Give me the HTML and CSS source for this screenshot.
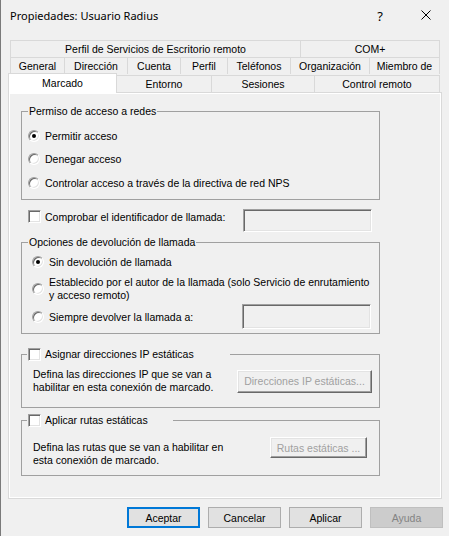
FILE: index.html
```html
<!DOCTYPE html>
<html lang="es">
<head>
<meta charset="utf-8">
<title>Propiedades: Usuario Radius</title>
<link rel="stylesheet" href="styles.css">
</head>
<body>
<div class="window">
  <div class="titlebar">
    <span class="title">Propiedades: Usuario Radius</span>
    <span class="capbtn help">?</span>
    <span class="capbtn close"><svg width="10" height="10" viewBox="0 0 10 10"><path d="M0.5 0.5 L9.5 9.5 M9.5 0.5 L0.5 9.5" stroke="#000" stroke-width="1" fill="none"/></svg></span>
  </div>

  <div class="tabs">
    <div class="tabrow">
      <div class="tab t-perfilts">Perfil de Servicios de Escritorio remoto</div>
      <div class="tab t-com last">COM+</div>
    </div>
    <div class="tabrow">
      <div class="tab t-general">General</div>
      <div class="tab t-direccion">Dirección</div>
      <div class="tab t-cuenta">Cuenta</div>
      <div class="tab t-perfil">Perfil</div>
      <div class="tab t-telefonos">Teléfonos</div>
      <div class="tab t-organizacion">Organización</div>
      <div class="tab t-miembro last">Miembro de</div>
    </div>
    <div class="tabrow front">
      <div class="tab sel t-marcado">Marcado</div>
      <div class="tab t-entorno">Entorno</div>
      <div class="tab t-sesiones">Sesiones</div>
      <div class="tab t-control">Control remoto</div>
    </div>
  </div>

  <div class="panel">
    <div class="page">
      <fieldset class="grp g1">
        <legend class="txtlegend">Permiso de acceso a redes</legend>
        <div class="gb">
          <div class="opt"><span class="radio on"></span><span>Permitir acceso</span></div>
          <div class="opt"><span class="radio"></span><span>Denegar acceso</span></div>
          <div class="opt o3"><span class="radio"></span><span>Controlar acceso a través de la directiva de red NPS</span></div>
        </div>
      </fieldset>

      <div class="callerrow">
        <div class="chk"><span class="check"></span><span>Comprobar el identificador de llamada:</span></div>
        <span class="field"></span>
      </div>

      <fieldset class="grp g2">
        <legend class="txtlegend">Opciones de devolución de llamada</legend>
        <div class="gb">
          <div class="opt2 r1"><span class="radio on"></span><span>Sin devolución de llamada</span></div>
          <div class="opt2 r2"><span class="radio"></span><span class="twoline">Establecido por el autor de la llamada (solo Servicio de enrutamiento<br>y acceso remoto)</span></div>
          <div class="opt2 r3"><span class="radio"></span><span>Siempre devolver la llamada a:</span><span class="field f2"></span></div>
        </div>
      </fieldset>

      <fieldset class="grp g3">
        <legend class="chklegend lw-ip"><span class="check"></span><span>Asignar direcciones IP estáticas</span></legend>
        <div class="gb body3">
          <p class="desc">Defina las direcciones IP que se van a<br>habilitar en esta conexión de marcado.</p>
          <span class="btn3d btn-ip">Direcciones IP estáticas...</span>
        </div>
      </fieldset>

      <fieldset class="grp g4">
        <legend class="chklegend lw-rt"><span class="check"></span><span>Aplicar rutas estáticas</span></legend>
        <div class="gb body4">
          <p class="desc">Defina las rutas que se van a habilitar en<br>esta conexión de marcado.</p>
          <span class="btn3d btn-rt">Rutas estáticas ...</span>
        </div>
      </fieldset>
    </div>
  </div>

  <div class="buttons">
    <span class="btn default">Aceptar</span>
    <span class="btn">Cancelar</span>
    <span class="btn">Aplicar</span>
    <span class="btn disabled">Ayuda</span>
  </div>
</div>
</body>
</html>
```

FILE: styles.css
```css
* { box-sizing: border-box; }
html, body { margin: 0; padding: 0; }
body {
  width: 449px;
  height: 536px;
  overflow: hidden;
  background: #f0f0f0;
  font-family: "Liberation Sans", Arial, sans-serif;
  font-size: 10.5px;
  color: #000;
}
.window {
  height: 536px;
  border-left: 1px solid #7a7a7a;
  display: flex;
  flex-direction: column;
}

/* title bar */
.titlebar {
  height: 30px;
  display: flex;
  align-items: center;
  padding-left: 9px;
}
.title {
  flex: 1;
  font-family: "Noto Sans", "Open Sans", sans-serif;
  font-size: 11px;
  padding-top: 1px;
}
.capbtn {
  width: 46px;
  height: 30px;
  display: flex;
  align-items: center;
  justify-content: center;
}
.help {
  font-family: "Noto Sans", sans-serif;
  font-size: 13px;
  padding-top: 1px;
}
.close svg { display: block; }

/* tabs */
.tabs {
  margin-top: 10px;
  margin-left: 9px;
  width: 430px;
}
.tabrow {
  display: flex;
  height: 17px;
}
.tab {
  height: 17px;
  border-top: 1px solid #d9d9d9;
  border-left: 1px solid #d9d9d9;
  background: #f0f0f0;
  display: flex;
  align-items: center;
  justify-content: center;
  white-space: nowrap;
  flex: none;
}
.tab.last { border-right: 1px solid #d9d9d9; }
.t-perfilts { width: 290px; }
.t-com { width: 140px; }
.t-general { width: 54px; }
.t-direccion { width: 63px; }
.t-cuenta { width: 53px; }
.t-perfil { width: 47px; }
.t-telefonos { width: 63px; }
.t-organizacion { width: 79px; }
.t-miembro { width: 71px; }

.tabrow.front {
  height: 18px;
  align-items: flex-end;
}
.front .tab {
  border-left: none;
  border-right: 1px solid #d9d9d9;
}
.front .tab.sel {
  position: relative;
  z-index: 1;
  width: 109px;
  height: 20px;
  margin-left: -2px;
  margin-bottom: -1px;
  border-left: 1px solid #d9d9d9;
  background: #fff;
  align-items: flex-start;
  padding-top: 3px;
}
.t-entorno { width: 95px; }
.t-sesiones { width: 103px; }
.t-control { width: 125px; }

/* panel */
.panel {
  margin-left: 7px;
  width: 434px;
  height: 407px;
  border: 1px solid #d9d9d9;
  background: #fff;
  padding: 1px;
}
.page {
  height: 100%;
  background: #f0f0f0;
  padding: 10px 0 0 11px;
}

/* group boxes */
.grp {
  margin: 0;
  min-width: 0;
  width: 359px;
  border: 1px solid #a0a0a0;
  padding-left: 0;
  padding-right: 0;
}
.txtlegend {
  margin-left: 6px;
  padding: 0 1px;
  height: 14px;
  line-height: 14px;
}
.chklegend {
  margin-left: 5px;
  padding: 0 0 0 1px;
  height: 14px;
  display: flex;
  align-items: center;
  gap: 4px;
}
.lw-ip { width: 203px; }
.lw-rt { width: 146px; }

.g1 { padding-top: 6px; padding-bottom: 5px; }
.g1 .gb { padding-left: 6px; }
.opt {
  height: 23px;
  display: flex;
  align-items: center;
  gap: 5px;
}
.opt.o3 { margin-top: 1px; }

.radio {
  width: 12px;
  height: 12px;
  flex: none;
  border-radius: 50%;
  border: 1px solid;
  border-color: #a0a0a0 #fff #fff #a0a0a0;
  box-shadow: inset 1px 1px 0 #696969, inset -1px -1px 0 #e3e3e3;
  background: #fff;
  display: flex;
  align-items: center;
  justify-content: center;
}
.radio.on::after {
  content: "";
  width: 4px;
  height: 4px;
  border-radius: 50%;
  background: #000;
}
.check {
  width: 13px;
  height: 13px;
  flex: none;
  border: 1px solid;
  border-color: #a0a0a0 #fff #fff #a0a0a0;
  box-shadow: inset 1px 1px 0 #696969, inset -1px -1px 0 #e3e3e3;
  background: #fff;
}

.field {
  width: 129px;
  height: 23px;
  flex: none;
  border: 1px solid;
  border-color: #a0a0a0 #fff #fff #a0a0a0;
  box-shadow: inset 1px 1px 0 #696969, inset -1px -1px 0 #e3e3e3;
  background: #f0f0f0;
}

.callerrow {
  margin-top: 9px;
  width: 359px;
  padding: 0 8px 0 7px;
  display: flex;
  align-items: flex-start;
}
.chk {
  margin-top: 1px;
  height: 13px;
  display: flex;
  align-items: center;
  gap: 4px;
}
.callerrow .field { margin-left: auto; }

.g2 {
  margin-top: 3px;
  padding-top: 1px;
  padding-bottom: 4px;
}
.g2 .gb { padding: 0 8px 0 10px; }
.opt2 {
  display: flex;
  align-items: center;
  gap: 5px;
}
.opt2.r1 { height: 23px; }
.opt2.r2 { height: 26px; margin-top: 3px; }
.opt2.r3 { height: 25px; margin-top: 2px; }
.twoline { line-height: 13px; white-space: nowrap; }
.f2 { margin-left: auto; height: 25px; }

.g3 {
  margin-top: 13px;
  padding-top: 7px;
  padding-bottom: 13px;
}
.g3 .gb { padding: 0 7px 0 11px; }
.g4 {
  margin-top: 5px;
  padding-top: 10px;
  padding-bottom: 8px;
}
.g4 .gb { padding: 0 12px 0 11px; }
.body3 {
  height: 26px;
  display: flex;
  align-items: center;
}
.body4 {
  display: flex;
  align-items: flex-start;
}
.desc {
  margin: 0;
  line-height: 13px;
}
.body4 .desc { margin-top: 4px; }

.btn3d {
  margin-left: auto;
  display: flex;
  align-items: center;
  justify-content: center;
  border: 1px solid;
  border-color: #fff #696969 #696969 #fff;
  box-shadow: inset -1px -1px 0 #a0a0a0, inset 1px 1px 0 #e3e3e3;
  background: #f0f0f0;
  color: #a0a0a0;
  white-space: nowrap;
}
.btn-ip { width: 135px; height: 23px; }
.btn-rt { width: 97px; height: 21px; }

/* dialog buttons */
.buttons {
  margin-top: 8px;
  display: flex;
  justify-content: flex-end;
  gap: 8px;
  padding-right: 6px;
}
.btn {
  width: 73px;
  height: 21px;
  display: flex;
  align-items: center;
  justify-content: center;
  background: #e1e1e1;
  border: 1px solid #adadad;
}
.btn.default {
  border: 2px solid #0078d7;
}
.btn.disabled {
  background: #cccccc;
  border-color: #bfbfbf;
  color: #838383;
}
```
